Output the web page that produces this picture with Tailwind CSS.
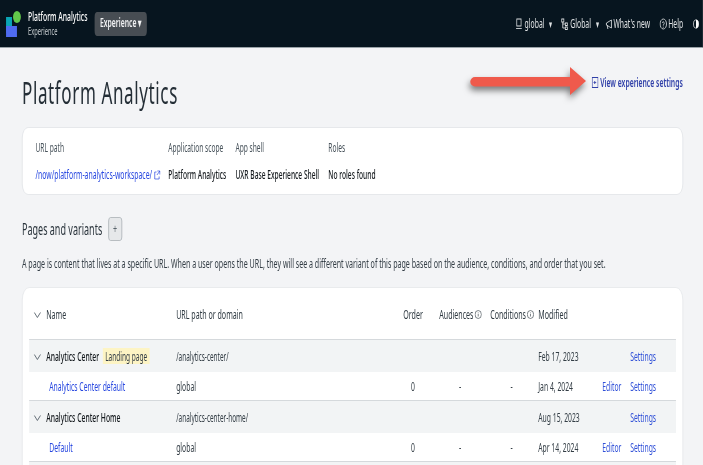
<!DOCTYPE html>
<html><head><meta charset="utf-8"><script src="https://cdn.jsdelivr.net/npm/@tailwindcss/browser@4"></script></head>
<body class="m-0 bg-[#f3f4f6]">
<div class="w-[703px] h-[465px] overflow-hidden relative font-['Noto_Sans',sans-serif] text-[#1f2a33]">
<div class="w-[1278px] origin-top-left scale-x-[0.55] relative">
  <header class="h-[48px] bg-[#07151f] border-b border-[#9aa3a8] flex items-center text-white text-[12.4px] pl-[11px] pr-[7px]">
    <svg class="w-[27px] h-[26px] shrink-0" viewBox="0 0 15 26" preserveAspectRatio="none"><rect x="0" y="6" width="6" height="16" fill="#0aa5b5"/><rect x="0" y="15" width="11" height="11" fill="#4f6bf0"/><ellipse cx="11" cy="6" rx="4" ry="6" fill="#62c84a"/></svg>
    <div class="flex flex-col leading-[14px] ml-[13px]"><span class="font-medium whitespace-nowrap">Platform Analytics</span><span class="text-[10.4px] text-[#c4cacd]">Experience</span></div>
    <button class="ml-[13px] w-[95px] h-[24px] rounded-[5px] bg-[#474d53] font-semibold text-[#f2f3f4] whitespace-nowrap">Experience ▾</button>
    <nav class="ml-auto flex items-center gap-[15px] pt-[1px] text-[12.4px] text-[#dfe2e4] whitespace-nowrap">
      <span class="flex items-center gap-[4px]"><svg class="w-[13px] h-[12px]" viewBox="0 0 10 12" fill="none" stroke="currentColor" preserveAspectRatio="none"><rect x="2" y="1" width="6" height="7"/><path d="M1 10.500h8"/></svg>global<span class="ml-[5px] text-[11px]">▾</span></span>
      <span class="flex items-center gap-[4px] mr-[-4px]"><svg class="w-[13px] h-[12px]" viewBox="0 0 10 12" fill="none" stroke="currentColor" preserveAspectRatio="none"><rect x="1" y="1" width="3" height="3"/><rect x="6" y="5" width="3" height="2.500"/><rect x="6" y="9" width="3" height="2.500"/><path d="M2.500 4v6H6M2.500 6H6"/></svg>Global<span class="ml-[5px] text-[11px]">▾</span></span>
      <span class="flex items-center gap-[2px]"><svg class="w-[13px] h-[12px]" viewBox="0 0 10 12" fill="none" stroke="currentColor" preserveAspectRatio="none"><path d="M9 2 2 5v2l7 3zM3 7l1 4"/></svg>What's new</span>
      <span class="flex items-center gap-[2px] ml-[2px]"><svg class="w-[14px] h-[12px]" viewBox="0 0 12 12" fill="none" stroke="currentColor" preserveAspectRatio="none"><circle cx="6" cy="6" r="5"/><path d="M4.500 4.800a1.500 1.500 0 1 1 1.500 2V7.500M6 8.700v1"/></svg>Help</span>
      <svg class="w-[11px] h-[10px] ml-[3px]" viewBox="0 0 12 12" preserveAspectRatio="none"><circle cx="6" cy="6" r="5" fill="none" stroke="#fff"/><path d="M6 1a5 5 0 0 1 0 10z" fill="#fff"/></svg>
    </nav>
  </header>
  <main class="pl-[40px] pr-[36.5px]">
    <div class="flex items-center justify-between h-[79px]">
      <h1 class="text-[31px] tracking-[1.1px] font-normal text-[#252f37] leading-none mt-[10px]">Platform Analytics</h1>
      <a class="flex items-center gap-[3px] text-[12.4px] font-semibold text-[#2f3fa8] -mt-[9px]"><svg class="w-[12px] h-[11px]" viewBox="0 0 9 11" fill="none" stroke="currentColor" preserveAspectRatio="none"><rect x=".5" y=".5" width="8" height="10"/><path d="M6 5.500H3m1.500-1.500L3 5.500 4.500 7"/></svg>View experience settings</a>
    </div>
    <section class="h-[68px] bg-white rounded-[11px] border border-[#e0e3e6] grid grid-cols-[241.500px_122px_169px_1fr] pl-[23.5px] pt-[12px] text-[12.1px] leading-[16px]">
      <div class="flex flex-col gap-[11px]"><span class="text-[#47525a]">URL path</span><span class="flex items-center gap-[3px] text-[12.5px] text-[#2747e0] whitespace-nowrap">/now/platform-analytics-workspace/<svg class="w-[12px] h-[10px] shrink-0" viewBox="0 0 9 10" fill="none" stroke="currentColor" stroke-width=".8" preserveAspectRatio="none"><path d="M3.500 2H1v7h6V6.500M4.500 1H8v3.500M8 1 4 5"/></svg></span></div>
      <div class="flex flex-col gap-[11px] whitespace-nowrap"><span class="text-[#47525a]">Application scope</span><span class="font-medium text-[#14191d]">Platform Analytics</span></div>
      <div class="flex flex-col gap-[11px] whitespace-nowrap"><span class="text-[#47525a]">App shell</span><span class="font-medium text-[#14191d]">UXR Base Experience Shell</span></div>
      <div class="flex flex-col gap-[11px] whitespace-nowrap"><span class="text-[#47525a]">Roles</span><span class="font-medium text-[#14191d]">No roles found</span></div>
    </section>
    <div class="flex items-center gap-[11px] mt-[22px] h-[24px]"><h2 class="text-[16.4px] font-normal text-[#2a343c]">Pages and variants</h2><span class="w-[25px] h-[24px] rounded-[4px] border border-[#a8afb4] bg-[#e6e8ea] flex items-center justify-center text-[13px] text-[#59646b]">+</span></div>
    <p class="mt-[14px] text-[12.9px] leading-[16px] text-[#333d45] whitespace-nowrap">A page is content that lives at a specific URL. When a user opens the URL, they will see a different variant of this page based on the audience, conditions, and order that you set.</p>
    <section class="mt-[16px] bg-white rounded-[13px] border border-[#e4e7e9] px-[12px] pb-[40px] text-[12.4px]">
      <div class="grid grid-cols-[31px_236.300px_412.800px_65.500px_92.700px_87.300px_116.300px_50.900px_1fr] items-center h-[52px] pt-[3px] border-b border-[#d5d9dc] text-[12.9px] text-[#2f3a42]">
        <svg class="w-[14px] h-[6px] ml-[7.600px]" viewBox="0 0 10 6" fill="none" stroke="#56616a" preserveAspectRatio="none"><path d="M1 .5l4 5 4-5"/></svg><span>Name</span><span>URL path or domain</span><span>Order</span>
        <span class="flex items-center gap-[2px]">Audiences<svg class="w-[13px] h-[9px]" viewBox="0 0 9 9" fill="none" stroke="currentColor" stroke-width=".7" preserveAspectRatio="none"><circle cx="4.500" cy="4.500" r="4"/><path d="M4.500 4v2.500M4.500 2.500v.8"/></svg></span>
        <span class="flex items-center gap-[2px]">Conditions<svg class="w-[13px] h-[9px]" viewBox="0 0 9 9" fill="none" stroke="currentColor" stroke-width=".7" preserveAspectRatio="none"><circle cx="4.500" cy="4.500" r="4"/><path d="M4.500 4v2.500M4.500 2.500v.8"/></svg></span>
        <span>Modified</span><span></span><span></span>
      </div>
      <div class="grid grid-cols-[31px_236.300px_412.800px_65.500px_92.700px_87.300px_116.300px_50.900px_1fr] items-center h-[32px] pt-[2px] bg-[#f2f4f5] text-[#333d45]">
        <svg class="w-[14px] h-[6px] ml-[7.600px]" viewBox="0 0 10 6" fill="none" stroke="#56616a" preserveAspectRatio="none"><path d="M1 .5l4 5 4-5"/></svg>
        <span class="whitespace-nowrap"><span class="font-medium text-[#14191d]">Analytics Center</span><span class="inline-block ml-[7px] px-[4px] h-[16px] leading-[16px] text-[11.9px] bg-[#fdf4c4]">Landing page</span></span>
        <span class="text-[11.7px]">/analytics-center/</span><span></span><span></span><span></span><span>Feb 17, 2023</span><span></span><a class="text-[#3151d8]">Settings</a>
      </div>
      <div class="grid grid-cols-[31px_236.300px_412.800px_65.500px_92.700px_87.300px_116.300px_50.900px_1fr] items-center h-[29px] pt-[2px] border-b border-[#d5d9dc] text-[#333d45]">
        <span></span><a class="text-[#2747e0] pl-[5.500px]">Analytics Center default</a><span>global</span><span class="pl-[14px]">0</span><span class="pl-[36px]">-</span><span class="pl-[37px]">-</span><span>Jan 4, 2024</span><a class="text-[#3151d8]">Editor</a><a class="text-[#3151d8]">Settings</a>
      </div>
      <div class="grid grid-cols-[31px_236.300px_412.800px_65.500px_92.700px_87.300px_116.300px_50.900px_1fr] items-center h-[32px] pt-[2px] bg-[#f2f4f5] text-[#333d45]">
        <svg class="w-[14px] h-[6px] ml-[7.600px]" viewBox="0 0 10 6" fill="none" stroke="#56616a" preserveAspectRatio="none"><path d="M1 .5l4 5 4-5"/></svg>
        <span class="font-medium text-[#14191d] whitespace-nowrap">Analytics Center Home</span>
        <span class="text-[11.7px]">/analytics-center-home/</span><span></span><span></span><span></span><span>Aug 15, 2023</span><span></span><a class="text-[#3151d8]">Settings</a>
      </div>
      <div class="grid grid-cols-[31px_236.300px_412.800px_65.500px_92.700px_87.300px_116.300px_50.900px_1fr] items-center h-[29px] pt-[2px] border-b border-[#d5d9dc] text-[#333d45]">
        <span></span><a class="text-[#2747e0] pl-[5.500px]">Default</a><span>global</span><span class="pl-[14px]">0</span><span class="pl-[36px]">-</span><span class="pl-[37px]">-</span><span>Apr 14, 2024</span><a class="text-[#3151d8]">Editor</a><a class="text-[#3151d8]">Settings</a>
      </div>
      <div class="h-[32px] bg-[#f2f4f5]"></div>
    </section>
  </main>
</div>
<svg class="absolute left-[473px] top-[67px] w-[113px] h-[28px] overflow-visible drop-shadow-[-1px_4px_3px_rgba(0,0,0,0.5)]" viewBox="0 0 113 28"><path d="M2 10H97V0L113 14 97 28V19.500H2a2 2 0 0 1 0-9.500z" fill="#ef5a4c"/></svg>
</div>
</body></html>
